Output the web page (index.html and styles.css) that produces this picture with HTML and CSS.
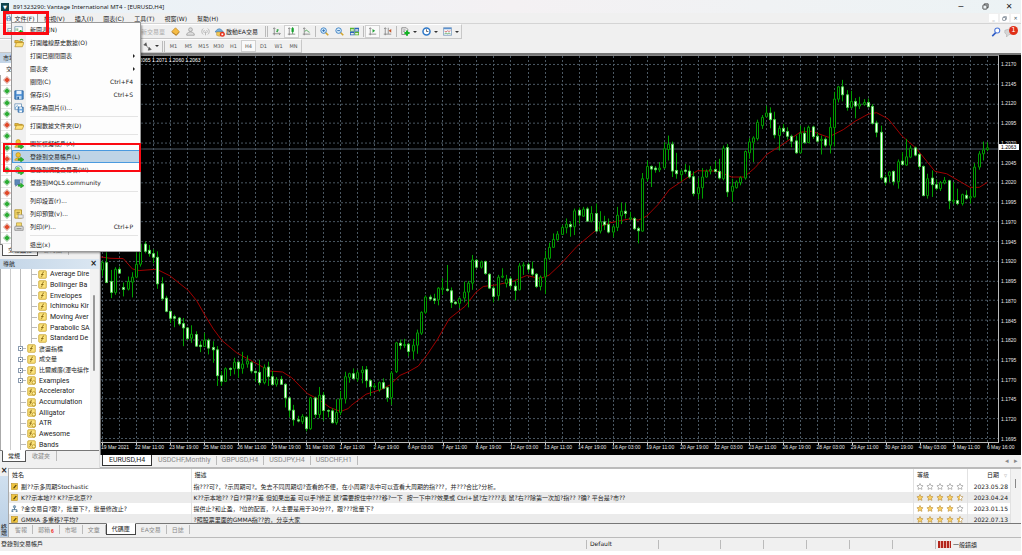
FILE: index.html
```html
<!DOCTYPE html>
<html lang="zh-Hant">
<head>
<meta charset="utf-8">
<title>891323290: Vantage International MT4 - [EURUSD,H4]</title>
<link rel="stylesheet" href="styles.css">
</head>
<body>
<svg class="defs" aria-hidden="true">
  <linearGradient id="halfstar"><stop offset=".5" stop-color="#fbd05f"/><stop offset=".5" stop-color="#fff"/></linearGradient>
  <symbol id="folder" viewBox="0 0 12 12"><path d="M1 3h4l1 1h4v2H1z" fill="#e8b93a" stroke="#a67c12" stroke-width=".7"/><path d="M1 10l2-5h9l-2 5z" fill="#ffe27a" stroke="#a67c12" stroke-width=".7"/></symbol>
  <symbol id="folder-go" viewBox="0 0 12 12"><path d="M1 3h4l1 1h4v2H1z" fill="#e8b93a" stroke="#a67c12" stroke-width=".7"/><path d="M1 10.500l2-5h9l-2 5z" fill="#ffe27a" stroke="#a67c12" stroke-width=".7"/><path d="M7 3c1-2 3-2 4 0" fill="none" stroke="#3b9b2c" stroke-width="1.300"/></symbol>
  <symbol id="newchart" viewBox="0 0 12 12"><path d="M1 2h9v7H1z" fill="#fff" stroke="#7a9bb5"/><path d="M2.500 7V4m2 3V4" stroke="#62a062"/><path d="M8 6v5M5.500 8.500h5.500" stroke="#16b51c" stroke-width="2"/></symbol>
  <symbol id="disk" viewBox="0 0 12 12"><path d="M1 1h10v10H1z" fill="#4c8fd4" stroke="#28619c"/><path d="M3 1h6v4H3z" fill="#e6f1fc"/><path d="M3 7h6v4H3z" fill="#bcd6ee"/><path d="M4 8h2v3H4z" fill="#28619c"/></symbol>
  <symbol id="saveimg" viewBox="0 0 12 12"><path d="M1 1h8v7H1z" fill="#fff" stroke="#6d94b8"/><path d="M2 7V5l2-2 2 3" fill="none" stroke="#5a9acb"/><path d="M5 5h6v6H5z" fill="#77aee2" stroke="#28619c"/><path d="M6.500 5h3v2h-3zM6.500 9h3v2h-3z" fill="#fff"/></symbol>
  <symbol id="user" viewBox="0 0 12 12"><circle cx="5" cy="3.500" r="2.800" fill="#f2c230" stroke="#a87e0c" stroke-width=".6"/><path d="M1 10c0-4 8-4 8 0z" fill="#f2c230" stroke="#a87e0c" stroke-width=".6"/><path d="M5 8h3V6l4 3.200L8 12v-2H5z" fill="#27b82c" stroke="#117a16" stroke-width=".5"/></symbol>
  <symbol id="globe" viewBox="0 0 12 12"><circle cx="5.500" cy="5.500" r="4.500" fill="#d9eefc" stroke="#6b9ab8"/><path d="M2 4c2-2 4-2 5 0s-3 3-4 4z" fill="#7fcf55"/><path d="M5 8h3V6l4 3.200L8 12v-2H5z" fill="#27b82c" stroke="#117a16" stroke-width=".5"/></symbol>
  <symbol id="community" viewBox="0 0 12 12"><path d="M1 2h6v6H4L2 10V8H1z" fill="#5a86b8" stroke="#3b5f8a" stroke-width=".6"/><path d="M7 1h4v6H9z" fill="#9bb7d6"/><path d="M5 8h3V6l4 3.200L8 12v-2H5z" fill="#27b82c" stroke="#117a16" stroke-width=".5"/></symbol>
  <symbol id="preview" viewBox="0 0 12 12"><path d="M1 1h8v10H1z" fill="#f8dc70" stroke="#a98a20"/><path d="M3 4h4M3 6h3" stroke="#8b7324"/><path d="M5 7h6v4H5z" fill="#e9e9e9" stroke="#8e8e8e" stroke-width=".7"/></symbol>
  <symbol id="printer" viewBox="0 0 12 12"><path d="M3 1h6v5H3z" fill="#f8dc70" stroke="#a98a20" stroke-width=".7"/><path d="M1 6q0-1 1-1h8q1 0 1 1v4H1z" fill="#ddd" stroke="#777" stroke-width=".8"/><path d="M3 8h6" stroke="#777"/></symbol>
  <symbol id="fx" viewBox="0 0 12 12"><rect x="1" y="1" width="10" height="10" rx="1" fill="#fbe27c" stroke="#c29a20"/><path d="M8 3c-2-.5-2 1-2.300 3S5 9.500 3.800 9M4 6h3.500" fill="none" stroke="#7b5b08"/></symbol>
  <symbol id="fxlock" viewBox="0 0 12 12"><rect x="1" y="1" width="10" height="10" rx="1" fill="#fbe27c" stroke="#c29a20"/><path d="M6.500 3C5 2.500 5 4 4.800 6S4 9 3 8.500M3 5.500h3.500" fill="none" stroke="#7b5b08"/><circle cx="9" cy="8.500" r="2.200" fill="#fff1a8" stroke="#b28a14"/></symbol>
  <symbol id="bars" viewBox="0 0 12 12"><path d="M3 1v10M1 9h10M1.500 2.500L3 1l1.500 1.500M9.500 7.500L11 9l-1.500 1.500" fill="none" stroke="#777"/><path d="M7 7V3m0 1h2M7 6H6" stroke="#1e9a2c" stroke-width="1.300"/></symbol>
  <symbol id="candle" viewBox="0 0 12 12"><path d="M3 1v10M1 9.500h10M1.500 2.500L3 1l1.500 1.500" fill="none" stroke="#777"/><path d="M7.500 0v9" stroke="#0f8c20"/><path d="M6 1.500h3v5H6z" fill="#12a02a"/></symbol>
  <symbol id="line" viewBox="0 0 12 12"><path d="M3 1v10M1 9.500h10M1.500 2.500L3 1l1.500 1.500" fill="none" stroke="#777"/><path d="M4 6c2-4 3 0 6 1" fill="none" stroke="#2f9b3a" stroke-width="1.100"/></symbol>
  <symbol id="scroll" viewBox="0 0 12 12"><path d="M3 1v10M1 9.500h10M1.500 2.500L3 1l1.500 1.500" fill="none" stroke="#777"/><path d="M6 2.500v5L9.500 5z" fill="#22a336"/></symbol>
  <symbol id="shift" viewBox="0 0 12 12"><path d="M3 1v10M1 9.500h10M1.500 2.500L3 1l1.500 1.500M7 1v8" fill="none" stroke="#777"/><path d="M11 2.500v5L7.500 5z" fill="#c4552a"/></symbol>
  <symbol id="zin" viewBox="0 0 12 12"><path d="M7 7l4 4" stroke="#d3a42c" stroke-width="2.200"/><circle cx="4.800" cy="4.800" r="3.700" fill="#d5ebfb" stroke="#3a7ec2" stroke-width="1.200"/><path d="M3 4.800h3.600M4.800 3v3.600" stroke="#2b6cb0" stroke-width="1.200"/></symbol>
  <symbol id="zout" viewBox="0 0 12 12"><path d="M7 7l4 4" stroke="#d3a42c" stroke-width="2.200"/><circle cx="4.800" cy="4.800" r="3.700" fill="#d5ebfb" stroke="#3a7ec2" stroke-width="1.200"/><path d="M3 4.800h3.600" stroke="#2b6cb0" stroke-width="1.200"/></symbol>
  <symbol id="tile" viewBox="0 0 12 12"><path d="M0 1h6v5H0zM6 6h6v5H6z" fill="#57b52c"/><path d="M6 1h6v5H6zM0 6h6v5H0z" fill="#2d63bd"/><path d="M1 3h4v2H1zM7 3h4v2H7zM1 8h4v2H1zM7 8h4v2H7z" fill="#e4f0df"/></symbol>
  <symbol id="indi" viewBox="0 0 12 12"><path d="M1 1h6l2 2v7H1z" fill="#eee" stroke="#777"/><path d="M3 4h3M3 6h2" stroke="#777"/><path d="M8 4.500v7M4.500 8h7" stroke="#14b324" stroke-width="2.600"/></symbol>
  <symbol id="clock" viewBox="0 0 12 12"><circle cx="6" cy="6" r="4.700" fill="#fff" stroke="#2f78c8" stroke-width="2"/><path d="M6 3v3h2.500" fill="none" stroke="#444"/></symbol>
  <symbol id="tmpl" viewBox="0 0 12 12"><path d="M.5 1h11v10H.500z" fill="#f5f9fd" stroke="#6c8fb5"/><path d="M1 1h10v2H1z" fill="#5d92cf"/><path d="M2 5.500l2 1 2-1.500 2 1 2-1" fill="none" stroke="#c55"/><path d="M2 9l2-1 2 1 2-1 2 1" fill="none" stroke="#4a9a4a"/></symbol>
  <symbol id="diamond" viewBox="0 0 12 12"><path d="M1 6l5-5 5 5-4 5z" fill="#f5bc45" stroke="#b97c12" stroke-width=".8"/><path d="M1 7l6 4 4-4" fill="none" stroke="#a76e10"/></symbol>
  <symbol id="person" viewBox="0 0 12 12"><circle cx="6" cy="3.500" r="2.500" fill="#ddd" stroke="#999"/><path d="M1 11V9q5-5 10 0v2z" fill="#ddd" stroke="#999"/></symbol>
  <symbol id="radio" viewBox="0 0 12 12"><path d="M3 2a5 5 0 000 8M9 2a5 5 0 010 8M4.500 4a3 3 0 000 4M7.500 4a3 3 0 010 4M6 6v5" fill="none" stroke="#aaa"/></symbol>
  <symbol id="robot" viewBox="0 0 12 12"><path d="M0 6q5-8 10 0z" fill="#73aede" stroke="#3e77a8" stroke-width=".7"/><path d="M2 6h6v4q-3 2-6 0z" fill="#f2cb59" stroke="#a8822a" stroke-width=".6"/><circle cx="8.800" cy="8.800" r="3" fill="#e42f1c"/><path d="M7.700 7.700h2.200v2.200H7.700z" fill="#fff"/></symbol>
  <symbol id="arrows" viewBox="0 0 12 12"><path d="M1 4l3-3 1 4zM3 3l4 5M7 11l4-1-3-3z" fill="#555" stroke="#555" stroke-width=".8"/></symbol>
  <symbol id="mag" viewBox="0 0 12 12"><path d="M6 6.500L1.500 11" stroke="#2e5bc4" stroke-width="2"/><circle cx="7.500" cy="4.200" r="3" fill="#fff" stroke="#4b76d8" stroke-width="1.300"/></symbol>
  <symbol id="bubble" viewBox="0 0 12 12"><path d="M1 4q4-3 9 1 1 4-4 4l-3 3V9q-3-1-2-5z" fill="#d5d5d5" stroke="#aaa" stroke-width=".6"/></symbol>
  <symbol id="note" viewBox="0 0 12 12"><rect x="1" y="1" width="10" height="10" fill="#f0c53e" stroke="#b98d15"/><path d="M3 9l5-6 2 1-4 5z" fill="#5c4a10"/></symbol>
  <symbol id="expert" viewBox="0 0 12 12"><circle cx="6" cy="3" r="2" fill="#8fb2cd" stroke="#4a6c88"/><path d="M6 5v3M2 11V8h8v3M1 11h3m4 0h3" fill="none" stroke="#3b6788" stroke-width="1.400"/></symbol>
  <symbol id="restore" viewBox="0 0 12 12"><rect x="1.500" y="3.500" width="7" height="7" rx="1" fill="none" stroke="currentColor" stroke-width="1.300"/><path d="M4 3V1.500h6.500V8H9" fill="none" stroke="currentColor" stroke-width="1.300"/></symbol>
  <symbol id="star" viewBox="0 0 12 12"><path d="M6 .8l1.600 3.400 3.700.5-2.700 2.600.7 3.700L6 9.200 2.700 11l.7-3.700L.700 4.700l3.700-.5z"/></symbol>
</svg>

<div class="app">
  <header class="titlebar">
    <span class="logo">▼</span>
    <h1>891323290: Vantage International MT4 - [EURUSD,H4]</h1>
    <div class="winbtns">
      <button aria-label="Minimize">─</button>
      <button aria-label="Restore"><svg class="ic"><use href="#restore"/></svg></button>
      <button aria-label="Close">✕</button>
    </div>
  </header>

  <nav class="menubar">
    <svg class="ic"><use href="#saveimg"/></svg>
    <div class="menuwrap">
      <button class="menubtn open">文件(F)</button>
      <div class="menu">
        <button class="mi"><svg class="ic"><use href="#newchart"/></svg><span>新圖表(N)</span></button>
        <button class="mi"><svg class="ic"><use href="#folder-go"/></svg><span>打開離線歷史數據(O)</span></button>
        <button class="mi"><i></i><span>打開已關閉圖表</span><b class="sub"></b></button>
        <button class="mi"><i></i><span>圖表夾</span><b class="sub"></b></button>
        <button class="mi"><i></i><span>關閉(C)</span><kbd>Ctrl+F4</kbd></button>
        <button class="mi"><svg class="ic"><use href="#disk"/></svg><span>保存(S)</span><kbd>Ctrl+S</kbd></button>
        <button class="mi"><svg class="ic"><use href="#saveimg"/></svg><span>保存為圖片(i)...</span></button>
        <hr>
        <button class="mi"><svg class="ic"><use href="#folder"/></svg><span>打開數據文件夾(D)</span></button>
        <hr>
        <button class="mi"><svg class="ic"><use href="#user"/></svg><span>開新模擬帳戶(A)</span></button>
        <button class="mi sel"><svg class="ic"><use href="#user"/></svg><span>登錄到交易帳戶(L)</span></button>
        <button class="mi"><svg class="ic"><use href="#globe"/></svg><span>登錄到網路交易者(W)</span></button>
        <button class="mi"><svg class="ic"><use href="#community"/></svg><span>登錄到MQL5.community</span></button>
        <hr>
        <button class="mi"><i></i><span>列印設置(r)...</span></button>
        <button class="mi"><svg class="ic"><use href="#preview"/></svg><span>列印預覽(v)...</span></button>
        <button class="mi"><svg class="ic"><use href="#printer"/></svg><span>列印(P)...</span><kbd>Ctrl+P</kbd></button>
        <hr>
        <button class="mi"><i></i><span>退出(x)</span></button>
      </div>
    </div>
    <button class="menubtn">檢視(V)</button>
    <button class="menubtn">插入(I)</button>
    <button class="menubtn">圖表(C)</button>
    <button class="menubtn">工具(T)</button>
    <button class="menubtn">視窗(W)</button>
    <button class="menubtn">幫助(H)</button>
    <div class="mdi">
      <button aria-label="Minimize chart">_</button>
      <button aria-label="Restore chart"><svg class="ic"><use href="#restore"/></svg></button>
      <button aria-label="Close chart">✕</button>
    </div>
  </nav>

  <div class="toolbar">
    <div class="tools main-tools">
      <button class="tb" aria-label="New chart"><svg class="ic"><use href="#newchart"/></svg></button>
      <button class="order">新交易單</button>
      <button class="tb" aria-label="MetaEditor"><svg class="ic"><use href="#diamond"/></svg></button>
      <button class="tb" aria-label="Community"><svg class="ic"><use href="#person"/></svg></button>
      <button class="tb" aria-label="Signals"><svg class="ic"><use href="#radio"/></svg></button>
      <button class="ea"><svg class="ic"><use href="#robot"/></svg>啟動EA交易</button>
      <i class="grip"></i>
      <button class="tb" aria-label="Bar chart"><svg class="ic"><use href="#bars"/></svg></button>
      <button class="tb on" aria-label="Candlesticks"><svg class="ic"><use href="#candle"/></svg></button>
      <button class="tb" aria-label="Line chart"><svg class="ic"><use href="#line"/></svg></button>
      <i class="vs"></i>
      <button class="tb" aria-label="Zoom in"><svg class="ic"><use href="#zin"/></svg></button>
      <button class="tb" aria-label="Zoom out"><svg class="ic"><use href="#zout"/></svg></button>
      <button class="tb" aria-label="Tile windows"><svg class="ic"><use href="#tile"/></svg></button>
      <i class="vs"></i>
      <button class="tb on" aria-label="Auto scroll"><svg class="ic"><use href="#scroll"/></svg></button>
      <button class="tb" aria-label="Chart shift"><svg class="ic"><use href="#shift"/></svg></button>
      <i class="vs"></i>
      <button class="tb drop" aria-label="Indicators"><svg class="ic"><use href="#indi"/></svg></button>
      <button class="tb drop" aria-label="Periods"><svg class="ic"><use href="#clock"/></svg></button>
      <button class="tb drop" aria-label="Templates"><svg class="ic"><use href="#tmpl"/></svg></button>
    </div>
    <div class="alerts">
      <button aria-label="Search"><svg class="ic"><use href="#mag"/></svg></button>
      <button class="bell" aria-label="Messages"><svg class="ic"><use href="#bubble"/></svg><span>1</span></button>
    </div>
  </div>

  <div class="toolbar periods">
    <div class="tools period-tools">
      <button class="tb drop" aria-label="Arrows"><svg class="ic"><use href="#arrows"/></svg></button>
      <i class="grip"></i>
      <button class="tf">M1</button><button class="tf">M5</button><button class="tf">M15</button><button class="tf">M30</button><button class="tf">H1</button><button class="tf on">H4</button><button class="tf">D1</button><button class="tf">W1</button><button class="tf">MN</button>
    </div>
  </div>

  <div class="main">
    <aside class="side">
      <section class="market">
        <h2 class="phead"><span>市場報價</span></h2>
        <div class="mhead">交易品種</div>
        <ul class="symbols" id="symbols"></ul>
        <div class="ptabs"><button class="ptab on">交易品種</button><button class="ptab">即時圖</button></div>
      </section>
      <section class="navi">
        <h2 class="phead"><span>導航</span><button aria-label="Close navigator">×</button></h2>
        <div class="treebox">
          <ul class="tree" id="tree"></ul>
          <div class="vbar"><i></i></div>
        </div>
        <div class="ptabs"><button class="ptab on">常規</button><button class="ptab">收藏夾</button></div>
      </section>
    </aside>

    <section class="chartpane">
      <div class="chart">
        <div class="plot"><svg id="plot" viewBox="0 0 2691 1164" preserveAspectRatio="none"></svg>
          <p class="ohlc">EURUSD,H4 1.2065 1.2071 1.2060 1.2063</p>
        </div>
        <div class="prices" id="prices"></div>
        <div class="times" id="times"></div>
      </div>
      <div class="ctabs">
        <button class="ctab on">EURUSD,H4</button><button class="ctab">USDCHF,Monthly</button><button class="ctab">GBPUSD,H4</button><button class="ctab">USDJPY,H4</button><button class="ctab">USDCHF,H1</button>
        <span class="arrows"><button aria-label="Scroll left">◂</button><button aria-label="Scroll right">▸</button></span>
      </div>
    </section>
  </div>

  <section class="terminal">
    <div class="tstrip"><button aria-label="Close terminal">×</button><span>終端</span></div>
    <div class="tbody">
      <div class="tview">
        <table>
          <colgroup><col class="c1"><col><col class="c3"><col class="c4"></colgroup>
          <thead><tr><th>姓名</th><th>描述</th><th>等級</th><th class="date">日期 <small>▽</small></th></tr></thead>
          <tbody id="codebase" lang="zh-Hans"></tbody>
        </table>
        <div class="tscroll"><i></i></div>
      </div>
      <div class="ttabs">
        <button>警報</button><button>郵箱<sub>6</sub></button><button>市場</button><button>文章</button><button class="on">代碼庫</button><button>EA交易</button><button>日誌</button>
      </div>
    </div>
  </section>

  <footer class="status">
    <span class="s0">登錄到交易帳戶</span><span class="s1">Default</span><span class="s2"></span><span class="s3"></span><span class="s3"></span><span class="s3"></span><span class="s3"></span><span class="s3"></span><span class="s4"><i class="net"></i>一般錯誤</span>
  </footer>

  <div class="mark mark-file"></div>
  <div class="mark mark-login"></div>
</div>
<script src="app.js"></script>
</body>
</html>
```

FILE: styles.css
```css
* { box-sizing: border-box; }
body {
  margin: 0;
  height: 100vh;
  padding: 0 1px 4px 0;
  background: #fff;
  color: #222;
  font: 6px/8px "DejaVu Sans", "Noto Sans CJK TC", sans-serif;
}
button, table { font: inherit; color: inherit; }
button { border: 0; padding: 0; margin: 0; background: none; white-space: nowrap; }
h1, h2, p, ul { margin: 0; padding: 0; font: inherit; list-style: none; }
.defs { position: absolute; width: 0; height: 0; }
.ic { width: 10px; height: 10px; display: block; flex: none; }
.app { position: relative; height: 100%; min-height: 400px; display: flex; flex-direction: column; background: #f0f0f0; }

.titlebar { height: 13px; flex: none; display: flex; align-items: center; gap: 4px; padding-left: 1px; background: linear-gradient(90deg, #e8f2f8, #f4f1f3 50%, #ecf3f5); }
.logo { width: 8px; height: 8px; background: #10434c; color: #fff; font-size: 5px; text-align: center; }
.titlebar h1 { font: 6px/8px "Noto Sans", sans-serif; }
.winbtns { margin-left: auto; display: flex; }
.winbtns button { width: 24px; height: 13px; display: flex; align-items: center; justify-content: center; font-size: 8px; }
.winbtns .ic { width: 7px; height: 7px; }

.menubar { height: 11px; flex: none; display: flex; padding-left: 4px; border-bottom: 1px solid #d4d4d4; }
.menubar > .ic { width: 7px; height: 9px; }
.menubtn { height: 11px; margin-right: 10px; }
.menuwrap { position: relative; width: 27px; margin-right: 6px; }
.menubtn.open { width: 27px; background: #fafafa; border: 1px solid #999; border-bottom: 0; line-height: 8px; }
.menu { position: absolute; z-index: 5; top: 10px; left: 1px; width: 128px; background: linear-gradient(90deg, #f0f0f0 14px, #fdfdfd 14px); box-shadow: 0 0 0 1px #9a9a9a, 2px 2px 2px #0006; }
.mi { width: 100%; height: 13px; display: flex; align-items: center; text-align: left; padding: 0 7px 0 2px; }
.mi > i { width: 10px; flex: none; }
.mi span { margin-left: 6px; }
.mi kbd { margin-left: auto; font: inherit; }
.mi.sel { background: #bed4e6; outline: 1px solid #4a9adf; outline-offset: -1px; }
.sub { margin-left: auto; margin-right: -2px; border-left: 2px solid #222; border-top: 2px solid transparent; border-bottom: 2px solid transparent; }
.menu hr { height: 1px; margin: 2px 2px 2px 18px; border: 0; background: #e4e4e4; }
.mdi { margin-left: auto; display: flex; gap: 2px; padding: 1px 1px 0 0; }
.mdi button { width: 9px; height: 8px; background: #fff; font-size: 5px; line-height: 6px; display: grid; place-items: center; color: #456; }
.mdi .ic { width: 5px; height: 5px; }

.toolbar { height: 15px; flex: none; display: flex; justify-content: space-between; }
.periods { height: 14px; }
.tools { display: flex; align-items: center; border: 1px solid #c8c8c8; border-left: 0; border-top-color: #fff; }
.main-tools { padding-left: 4px; }
.tb { width: 15px; height: 13px; display: flex; align-items: center; justify-content: center; }
.tb .ic { width: 9px; height: 9px; }
.on.tb, .on.tf { background: #fafafa; box-shadow: inset 0 0 0 1px #d0d0d0; }
.order { width: 146px; margin-right: 3px; color: #aaa; text-align: right; }
.ea { display: flex; align-items: center; gap: 1px; margin-left: 2px; width: 47px; }
.grip { width: 3px; height: 11px; margin: 0 1px 0 3px; border-left: 1px solid #bbb; border-right: 1px solid #bbb; }
.vs { width: 1px; height: 11px; background: #bbb; margin: 0 1px; }
.tb.drop { width: 21px; gap: 3px; }
.drop::after { content: ""; border-top: 2px solid #333; border-left: 2px solid transparent; border-right: 2px solid transparent; }
.alerts { display: flex; align-items: center; gap: 3px; padding-right: 3px; }
.bell { position: relative; width: 14px; }
.bell span { position: absolute; top: -1px; right: 0; width: 9px; height: 9px; border-radius: 50%; background: #e03018; color: #fff; font-size: 7px; line-height: 9px; text-align: center; }
.period-tools { padding-left: 140px; }
.period-tools .grip { margin-left: 1px; }
.tf { width: 15px; height: 12px; font-size: 5px; color: #555; }

.main { flex: 1; min-height: 0; display: grid; grid-template-columns: 100px 1fr; }
.side { display: flex; flex-direction: column; min-height: 0; overflow: hidden; border-right: 1px solid #ddd; }
.phead { height: 10px; flex: none; display: flex; justify-content: space-between; padding: 0 2px 0 3px; background: linear-gradient(90deg, #c3d5e7, #dbe7f2); line-height: 10px; }
.phead button { font-size: 8px; font-weight: bold; }
.market { flex: 206 1 0; min-height: 0; display: flex; flex-direction: column; }
.mhead { height: 12px; padding-left: 6px; line-height: 12px; background: #fff; }
.symbols { flex: 1; display: flex; flex-direction: column; background: #fff; border-left: 1px solid #aaa; }
.symbols li { flex: 1; display: flex; align-items: center; padding-left: 4px; border-bottom: 1px solid #e6e6e6; }
.symbols i { width: 4px; height: 4px; background: #2cae34; outline: 1px solid #1c7f2455; transform: rotate(45deg); }
.symbols .down { background: #e2492a; outline-color: #a52c1455; }
.ptabs { height: 13px; flex: none; display: flex; padding-left: 2px; border-top: 1px solid #777; margin-bottom: 2px; }
.ptab { padding: 0 6px; color: #888; border-right: 1px solid #bbb; height: 10px; line-height: 10px; }
.ptab.on { margin-top: -1px; height: 12px; background: #fff; color: #222; border: 1px solid #555; border-top-color: #fff; padding: 0 5px; }
.navi { flex: 209 1 0; min-height: 0; display: flex; flex-direction: column; }
.navi .ptabs { margin-bottom: 5px; }
.treebox { flex: 1; min-height: 0; display: flex; background: #fff; border-left: 1px solid #aaa; }
.tree { flex: 1; min-width: 0; display: flex; flex-direction: column; background: linear-gradient(#ccc, #ccc) 9px 0 / 1px 100% no-repeat; }
.tree li { flex: 1; min-height: 0; display: flex; align-items: center; gap: 3px; padding-left: 26px; white-space: nowrap; font-family: Roboto, "Noto Sans CJK TC", sans-serif; font-size: 7px; line-height: 8px; background: linear-gradient(#bbb, #bbb) 19px 0 / 1px 100% no-repeat, linear-gradient(#bbb, #bbb) 19px 5px / 6px 1px no-repeat; }
.tree li.deep { padding-left: 37px; background: linear-gradient(#bbb, #bbb) 19px 0 / 1px 100% no-repeat, linear-gradient(#bbb, #bbb) 30px 0 / 1px 100% no-repeat, linear-gradient(#bbb, #bbb) 30px 5px / 6px 1px no-repeat; }
.tree li.cjk { font-size: 6px; }
.tree .ic { width: 9px; height: 9px; }
.tree .plus { width: 5px; height: 5px; flex: none; margin: 0 1px 0 -9px; border: 1px solid #8a9bb0; background: linear-gradient(#456, #456) 1px 1px / 1px 1px no-repeat #fff; }
.vbar { width: 9px; flex: none; background: #f2f2f2; padding: 26px 0 0 3px; }
.vbar i { display: block; width: 2px; height: 76px; background: #999; border-radius: 1px; }

.chartpane { display: flex; flex-direction: column; min-width: 0; min-height: 0; }
.chart { flex: 1; min-height: 0; display: grid; grid-template: minmax(0, 1fr) 12px / minmax(0, 1fr) 22px; background: #000; border-top: 2px solid #777; border-left: 1px solid #777; color: #e8e8e8; font: 5px/6px "Liberation Sans", sans-serif; }
.plot { position: relative; border-right: 1px solid #bbb; border-bottom: 1px solid #bbb; border-top: 1px solid #888; min-height: 0; }
.plot svg { display: block; width: 100%; height: 100%; }
.plot svg * { vector-effect: non-scaling-stroke; }
.grid { stroke: #4b5863; stroke-dasharray: 2 2; fill: none; }
.now { stroke: #4f5c68; }
.ma { stroke: #a00000; fill: none; }
.wick { stroke: #00a000; fill: none; }
.up { stroke: #009a00; fill: #000; }
.dn { stroke: #4fd84f; fill: #fff; }
.ohlc { position: absolute; left: 4px; top: 1px; color: #fff; white-space: nowrap; }
.prices { position: relative; display: flex; flex-direction: column; justify-content: space-between; padding: 6px 0 1px 2px; }
.prices b { position: absolute; left: 0; right: 2px; top: 23%; padding-left: 2px; font-weight: normal; background: #fff; color: #000; }
.times { grid-column: 1 / -1; display: grid; grid-template-columns: repeat(27, minmax(0, 1fr)); }
.times span { white-space: nowrap; padding-left: 0; line-height: 5px; }
.times span::before { content: ""; display: block; width: 1px; height: 2px; margin-left: 1px; background: #ccc; }
.ctabs { height: 13px; flex: none; display: flex; padding-left: 2px; font: 7px/9px Roboto, sans-serif; border-bottom: 1px solid #bbb; }
.ctab { padding: 0 5px; color: #888; height: 9px; margin-top: 1px; border-right: 1px solid #bbb; }
.ctab.on { height: 11px; margin: 0 1px 0 0; padding: 0 6px; background: #fff; color: #222; border: 1px solid #333; border-top: 0; }
.arrows { margin-left: auto; display: flex; gap: 5px; padding-right: 3px; color: #888; }

.terminal { height: 70px; flex: none; display: grid; grid-template-columns: 8px minmax(0, 1fr); border-bottom: 1px solid #bbb; }
.tstrip { display: flex; flex-direction: column; align-items: center; justify-content: space-between; padding-bottom: 1px; background: linear-gradient(#f0f0f0 8px, #d0e0ef 8px, #b8cee4); }
.tstrip button { font-size: 8px; line-height: 6px; font-weight: bold; }
.tstrip span { width: 6px; line-height: 6px; }
.tbody { display: flex; flex-direction: column; min-height: 0; min-width: 0; border-left: 1px solid #aaa; }
.tview { flex: 1; min-height: 0; display: flex; align-items: flex-start; overflow: hidden; background: #fff; border-top: 1px solid #bbb; border-bottom: 1px solid #777; }
table { flex: 1; width: 100%; border-collapse: collapse; table-layout: fixed; }
.c1 { width: 182px; } .c3 { width: 54px; } .c4 { width: 43px; }
th { height: 12px; text-align: left; font-weight: normal; padding: 0 3px; }
th.date { text-align: right; }
th small { font-size: 4px; color: #888; margin-left: 3px; }
td { height: 11px; padding: 0 2px; white-space: nowrap; overflow: hidden; font-family: "DejaVu Sans", "Noto Sans CJK SC", sans-serif; }
td, th { border-right: 1px solid #e2e2e2; }
tbody tr:nth-child(even) { background: #ebebeb; }
.name, .stars { display: flex; align-items: center; gap: 3px; }
.name .ic { width: 7px; height: 7px; }
.stars { gap: 2px; }
.stars svg { width: 8px; height: 7px; fill: #fff; stroke: #888; stroke-width: 1; }
.stars .full { fill: #fbd05f; stroke: #b5893a; }
.stars .half { fill: url(#halfstar); stroke: #b5893a; }
td.date { text-align: right; }
.tscroll { width: 10px; padding: 10px 0 0 4px; background: #f2f2f2; align-self: stretch; }
.tscroll i { display: block; width: 1px; height: 9px; background: #888; }
.ttabs { height: 13px; flex: none; display: flex; padding-left: 1px; }
.ttabs button { padding: 0 5px; height: 9px; margin-top: 1px; color: #888; border-right: 1px solid #bbb; display: flex; align-items: center; }
.ttabs .on { height: 12px; margin-top: -1px; background: #fff; color: #222; border: 1px solid #444; border-top-color: #fff; }
.ttabs sub { margin-left: 1px; color: #e22; font: bold 5px/5px "Liberation Sans", sans-serif; align-self: flex-end; }

.status { height: 13px; flex: none; display: flex; align-items: center; padding: 1px 0; }
.status span { height: 9px; padding-left: 3px; border-left: 1px solid #bbb; }
.status .s0 { flex: 1; border: 0; padding-left: 1px; }
.s1 { width: 72px; } .s2 { width: 62px; } .s3 { width: 43px; }
.status .s4 { width: 86px; padding-left: 2px; display: flex; align-items: center; gap: 2px; }
.net { width: 13px; height: 7px; background: repeating-linear-gradient(90deg, #b3261c 0 2px, #e9b0a8 2px 3px); }

.mark { position: absolute; z-index: 9; pointer-events: none; border: 2px solid #fb0a12; }
.mark-file { left: 3px; top: 11px; width: 46px; height: 24px; border-width: 3px; }
.mark-login { left: 3px; top: 143px; width: 138px; height: 29px; }
```

FILE: app.js
```js
const NS = 'http://www.w3.org/2000/svg';
const plot = document.getElementById('plot');
const icon = (id) => `<svg class="ic"><use href="#${id}"/></svg>`;

function draw(name, cls, attrs) {
  const el = document.createElementNS(NS, name);
  el.setAttribute('class', cls);
  for (const key in attrs) el.setAttribute(key, attrs[key]);
  plot.append(el);
}

/* Each candle: high, body top, body bottom, low, direction. Every block has its own vertical base. */
const blocks = [
  [495, `122 128 150 168 u,95 128 188 190 d,150 185 218 235 d,142 148 218 225 u,140 148 160 162 d,188 203 209 230 d,170 185 208 212 u,157 172 187 233 u,95 133 172 175 u,65 72 133 140 u,65 72 94 100 d,75 91 101 110 d,88 101 112 130 d,94 112 192 207 d,172 192 237 243 d,228 235 275 278 d,272 275 296 310 d,285 291 296 323 d,292 295 313 318 d,295 312 325 380 d,322 325 357 362 d,317 344 356 370 u,335 345 380 382 d,365 377 381 398 d,340 362 381 381 u,357 362 386 405 d,365 384 391 430 d,380 391 469 500 d,455 469 486 500 d,444 448 486 488 u,444 447 450 470 d,415 428 448 465 u,425 428 448 475 d,397 434 447 463 u,408 425 434 445 u,425 430 455 462 d,453 456 460 487 d,421 459 490 498 d,435 445 490 495 u,427 443 472 500 d,455 472 496 498 d,473 480 495 502 u,470 480 495 497 d,492 495 536 565 d,535 536 573 595 d,557 573 602 620 d,590 602 606 610 d,585 592 608 615 u,590 594 629 637 d,533 536 629 632 u,532 536 586 597 d,503 528 586 597 u,518 528 574 605 d,570 574 576 595 d,567 575 611 613 d,540 580 611 617 u,515 539 580 588 u,457 472 539 553 u,460 463 474 490 u,447 463 478 480 d,452 460 478 487 u,440 452 460 492 u,440 451 484 505 d,480 484 502 530 d,492 500 503 507 u,487 490 512 517 u,477 490 507 510 d,502 505 535 548 d,455 461 535 557 u,367 370 457 461 u,360 371 378 390 d,358 375 378 385 u,370 374 396 410 d,358 377 395 420 u,330 340 377 403 u,275 278 341 346 u,227 232 278 283 u,225 232 238 243 d,222 237 242 253 d,202 205 240 257 u,175 205 209 225 u,135 208 212 216 d,203 213 248 265 d,245 247 252 255 d,233 236 251 265 u,185 217 235 248 u,183 190 217 263 u,105 120 190 210 u,117 121 142 146 d,122 126 142 146 u,122 125 161 165 d,160 163 205 208 d,198 205 230 248 d,165 172 228 242 u,145 169 172 175 u,165 178 191 203 u,170 177 198 208 d,183 199 212 242 d,130 138 210 212 u,127 135 138 165 u,128 134 148 158 d,125 147 163 168 d,160 163 200 205 d,167 172 200 212 u,92 115 171 223 u,68 82 115 120 u,40 58 82 82 u,33 42 59 62 u`],
  [135, `375 382 403 405 u,355 372 383 400 u,365 373 380 410 d,325 332 380 405 u,322 330 345 370 d,320 327 348 350 u,320 326 363 365 d,318 340 363 367 u,310 340 393 395 d,333 365 393 400 u,347 365 374 390 d,355 373 396 400 d,375 380 396 412 u,320 345 382 393 u,307 333 347 372 u,308 333 340 355 d,335 353 357 360 u,350 355 386 390 d,380 385 392 430 d,218 235 393 395 u,180 198 235 243 u,195 198 206 260 d,197 203 208 217 d,185 203 208 215 u,125 145 202 205 u,105 131 147 180 u,123 131 212 230 d,157 210 220 235 d,207 212 223 243 u,190 209 213 220 d,195 212 230 235 d,213 229 280 288 d,232 262 280 298 u,203 230 262 295 u,207 213 230 232 u,197 207 212 222 u,182 207 213 217 d,175 213 233 237 d,135 143 235 240 u,130 141 275 290 d,235 258 273 305 u,240 245 262 265 u,228 232 247 255 u,150 153 233 238 u,113 124 157 175 u,107 112 125 185 u,57 65 114 120 u,43 50 75 85 u,15 37 48 50 u,20 37 57 83 d,33 57 103 113 d,75 83 105 150 u`],
  [15, `190 203 213 215 d,200 213 227 237 d,222 227 242 260 d,225 241 277 280 d,195 218 277 279 u,200 218 246 250 d,195 200 246 248 u,195 199 228 235 d,217 227 242 246 d,225 236 240 282 u,230 236 254 260 d,170 200 254 279 u,93 115 201 258 u,75 78 115 125 u,57 78 102 122 d,88 102 140 150 d,90 122 140 143 u,112 122 136 173 d,108 130 136 145 u,115 125 131 135 u,113 125 138 140 d,130 137 188 192 d,180 187 215 230 d,195 215 352 358 d,343 352 366 375 d,333 335 346 365 u,330 333 364 375 d,297 304 364 385 u,275 302 312 315 d,235 289 314 316 u,255 263 290 293 u,258 262 284 288 d,278 282 318 325 d,315 318 406 408 d,340 355 406 415 u,330 353 373 410 d,357 373 384 390 d,362 367 385 392 u,350 360 368 372 u,358 361 422 447 d,365 420 423 432 u,385 421 430 435 d,400 403 430 436 u,390 405 414 418 d,385 409 413 430 u,308 320 410 412 u,272 280 320 328 u,243 268 280 300 u,245 262 267 272 u`],
];

for (let k = 0; k <= 52; k++) {
  const x = 4.5 + Math.round(k * 17.02) * 3;
  draw('path', 'grid', { d: `M${x} 0V1164` });
}
for (let k = 0; k < 20; k++) {
  const y = 25.5 + Math.round(k * 19.79) * 3;
  draw('path', 'grid', { d: `M0 ${y}H2691` });
}
draw('path', 'now', { d: 'M0 280.500H2691' });

/* Moving average: x shift, y shift, points */
const average = [
  [-3, 495, [3,111, 30,115, 70,116, 97,147, 118,152, 170,148, 210,168, 265,212, 290,243, 315,287, 340,328, 365,362, 410,400, 465,430, 510,455, 548,458, 575,475, 622,523, 655,540, 690,565, 722,577, 745,568]],
  [747, 495, [2,560, 48,525, 95,510, 120,497, 150,468, 175,457, 205,440, 232,405, 262,360, 298,297, 345,260, 378,217, 400,200, 440,195, 490,184, 530,167, 570,176]],
  [1317, 135, [27,526, 60,495, 110,440, 180,380, 210,368, 270,356, 295,360, 320,348, 355,312, 388,268, 430,240, 472,211, 530,212, 575,230, 612,230, 645,202, 680,162]],
  [2037, 15, [0,257, 60,215, 95,212, 145,230, 190,207, 225,182, 265,160, 290,156, 325,175, 365,225, 410,265, 465,333, 500,340, 570,381, 598,381, 622,366]],
];
const points = [];
for (const [dx, dy, list] of average) {
  for (let i = 0; i < list.length; i += 2) points.push(`${list[i] + dx},${list[i + 1] + dy}`);
}
draw('polyline', 'ma', { points: points.join(' ') });

let index = 0;
for (const [base, text] of blocks) {
  for (const row of text.split(',')) {
    const [high, top, bottom, low, dir] = row.split(' ');
    const x = 4.5 + Math.round(index * 4.255) * 3;
    const y = (v) => base + Number(v);
    draw('path', 'wick', { d: `M${x} ${y(high)}V${y(low)}` });
    draw('rect', dir === 'u' ? 'up' : 'dn', { x: x - 3, y: y(top), width: 6, height: Math.max(2, bottom - top) });
    index++;
  }
}

const prices = [];
for (let p = 12170; p >= 11695; p -= 25) prices.push(`<span>${(p / 10000).toFixed(4)}</span>`);
document.getElementById('prices').innerHTML = prices.join('') + '<b>1.2063</b>';

document.getElementById('times').innerHTML = [
  '19 Mar 2021', '22 Mar 11:00', '23 Mar 19:00', '25 Mar 03:00', '26 Mar 11:00', '29 Mar 19:00', '31 Mar 03:00',
  '1 Apr 11:00', '2 Apr 19:00', '6 Apr 03:00', '7 Apr 11:00', '8 Apr 19:00', '12 Apr 03:00', '13 Apr 11:00',
  '14 Apr 19:00', '16 Apr 03:00', '19 Apr 11:00', '20 Apr 19:00', '22 Apr 03:00', '23 Apr 11:00', '26 Apr 19:00',
  '28 Apr 03:00', '29 Apr 11:00', '30 Apr 19:00', '4 May 03:00', '5 May 11:00', '6 May 16:00',
].map((t) => `<span>${t}</span>`).join('');

document.getElementById('symbols').innerHTML = [...'dgggdggdggdggdg']
  .map((c) => `<li><i class="${c === 'd' ? 'down' : ''}"></i></li>`).join('');

const deep = ['Average Dire', 'Bollinger Ba', 'Envelopes', 'Ichimoku Kir', 'Moving Aver', 'Parabolic SA', 'Standard De'];
const groups = ['震盪指標', '成交量', '比爾威廉(渾屯操作'];
const custom = ['Accelerator', 'Accumulation', 'Alligator', 'ATR', 'Awesome', 'Bands'];
document.getElementById('tree').innerHTML =
  deep.map((t) => `<li class="deep">${icon('fx')}${t}</li>`).join('') +
  groups.map((t) => `<li class="cjk"><i class="plus"></i>${icon('fx')}${t}</li>`).join('') +
  `<li><i class="plus"></i>${icon('fxlock')}Examples</li>` +
  custom.map((t) => `<li>${icon('fxlock')}${t}</li>`).join('');

const rows = [
  ['note', '副??示多周期Stochastic', '指???可?，?示周期可?。免去不同周期切?查看的不便，在小周期?表中可以查看大周期的指???，并???合比?分析。', 0, '2023.05.28'],
  ['note', 'K??示本地?? K??示北京??', 'K??示本地?? ?自??算??差 但如果出差 可以手?修正 鼠?需要按住中???移?一下&nbsp; 按一下中??效果或 Ctrl+鼠?左????表 鼠?右??除第一次加?指?? ?确? 平台是?市??', 4.5, '2023.04.24'],
  ['expert', '?金交易自?跟?，批量下?，批量修改止?', '提供止?和止盈，?位的配置，?人主要是用于30分??，跟???批量下?', 4, '2023.01.15'],
  ['note', 'GMMA 多重移?平均?', '?照股票里面的GMMA指??的，分享大家', 4.5, '2022.07.13'],
];
const star = (i, rate) => {
  const cls = rate >= i ? 'full' : rate > i - 1 ? 'half' : '';
  return `<svg class="${cls}"><use href="#star"/></svg>`;
};
document.getElementById('codebase').innerHTML = rows.map(([ic, name, desc, rate, date]) =>
  `<tr><td><span class="name">${icon(ic)}${name}</span></td><td>${desc}</td>` +
  `<td><span class="stars">${[1, 2, 3, 4, 5].map((i) => star(i, rate)).join('')}</span></td><td class="date">${date}</td></tr>`).join('');
```
